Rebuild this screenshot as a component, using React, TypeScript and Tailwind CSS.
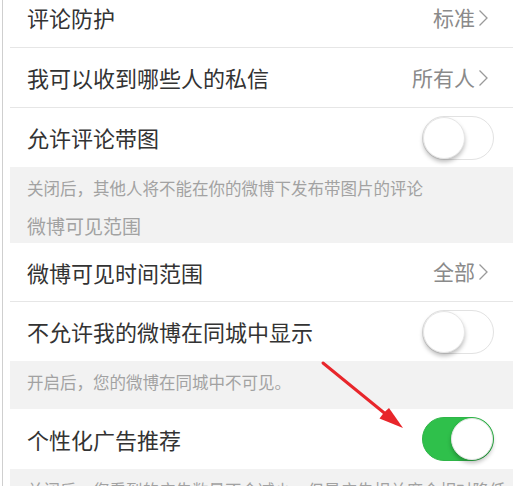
import React from "react";

type Row =
  | { kind: "link"; label: string; value: string; h: string; border?: boolean }
  | { kind: "toggle"; label: string; on: boolean; h: string; border?: boolean };

function Chevron() {
  return (
    <svg width="12" height="20" viewBox="0 0 12 20" className="ml-[2px]">
      <path d="M2.5 2.5 L10 10 L2.5 17.5" fill="none" stroke="#9a9a9a" strokeWidth="1.3" />
    </svg>
  );
}

function Toggle({ on }: { on: boolean }) {
  return (
    <div
      className={`relative w-[72px] h-[44px] rounded-full border ${
        on ? "bg-[#2fc04b] border-[#2fb548]" : "bg-white border-[#e2e2e2]"
      }`}
    >
      <div
        className={`absolute top-[0px] w-[42px] h-[42px] rounded-full bg-white border border-[#e6e6e6] shadow-[0_3px_4px_rgba(0,0,0,0.25)] ${
          on ? "right-[0px]" : "left-[0px]"
        }`}
      />
    </div>
  );
}

function SettingRow({ row }: { row: Row }) {
  return (
    <div
      className={`shrink-0 flex items-center justify-between pl-[17px] bg-white ${row.h} ${
        row.border ? "border-b border-[#e6e6e6]" : ""
      } ${row.kind === "link" ? "pr-[24px]" : "pr-[19px]"}`}
    >
      <span className="text-[22px] text-[#333]">{row.label}</span>
      {row.kind === "link" ? (
        <span className="flex items-center text-[21px] text-[#8a8a8a]">
          {row.value}
          <Chevron />
        </span>
      ) : (
        <Toggle on={row.on} />
      )}
    </div>
  );
}

export default function App() {
  return (
    <div className="relative w-[513px] h-[486px] overflow-hidden bg-white flex font-['Noto_Sans_CJK_SC',sans-serif]">
      {/* left edge */}
      <div className="w-[10px] shrink-0 flex">
        <div className="ml-[2px] w-px h-full bg-[#cfcfcf]" />
      </div>

      <div className="flex-1 flex flex-col -mt-[12px]">
        <SettingRow row={{ kind: "link", label: "评论防护", value: "标准", h: "h-[60px]", border: true }} />
        <SettingRow row={{ kind: "link", label: "我可以收到哪些人的私信", value: "所有人", h: "h-[60px]", border: true }} />
        <SettingRow row={{ kind: "toggle", label: "允许评论带图", on: false, h: "h-[59px]" }} />

        <div className="h-[76px] shrink-0 overflow-hidden bg-[#f2f2f2] pl-[17px] pt-[2px] text-[#a2a2a2]">
          <div className="text-[16.5px] leading-[38px]">关闭后，其他人将不能在你的微博下发布带图片的评论</div>
          <div className="text-[19px] leading-[38px]">微博可见范围</div>
        </div>

        <SettingRow row={{ kind: "link", label: "微博可见时间范围", value: "全部", h: "h-[59px]", border: true }} />
        <SettingRow row={{ kind: "toggle", label: "不允许我的微博在同城中显示", on: false, h: "h-[59px]" }} />

        <div className="h-[48px] shrink-0 bg-[#f2f2f2] pl-[17px] pt-[1px] text-[16.5px] leading-[40px] text-[#a2a2a2]">
          开启后，您的微博在同城中不可见。
        </div>

        <SettingRow row={{ kind: "toggle", label: "个性化广告推荐", on: true, h: "h-[60px]" }} />

        <div className="h-[48px] shrink-0 bg-[#f2f2f2] pl-[17px] pt-[1px] text-[16.5px] leading-[40px] text-[#a2a2a2] whitespace-nowrap">
          关闭后，您看到的广告数量不会减少，但是广告相关度会相对降低
        </div>
      </div>

      {/* red arrow annotation */}
      <svg className="absolute left-0 top-0 pointer-events-none" width="513" height="486">
        <line x1="323" y1="363" x2="388" y2="416" stroke="#e8262b" strokeWidth="3" strokeLinecap="round" />
        <polygon points="403,428 379.5,418.5 384,412.5 389,408" fill="#e8262b" />
      </svg>
    </div>
  );
}
